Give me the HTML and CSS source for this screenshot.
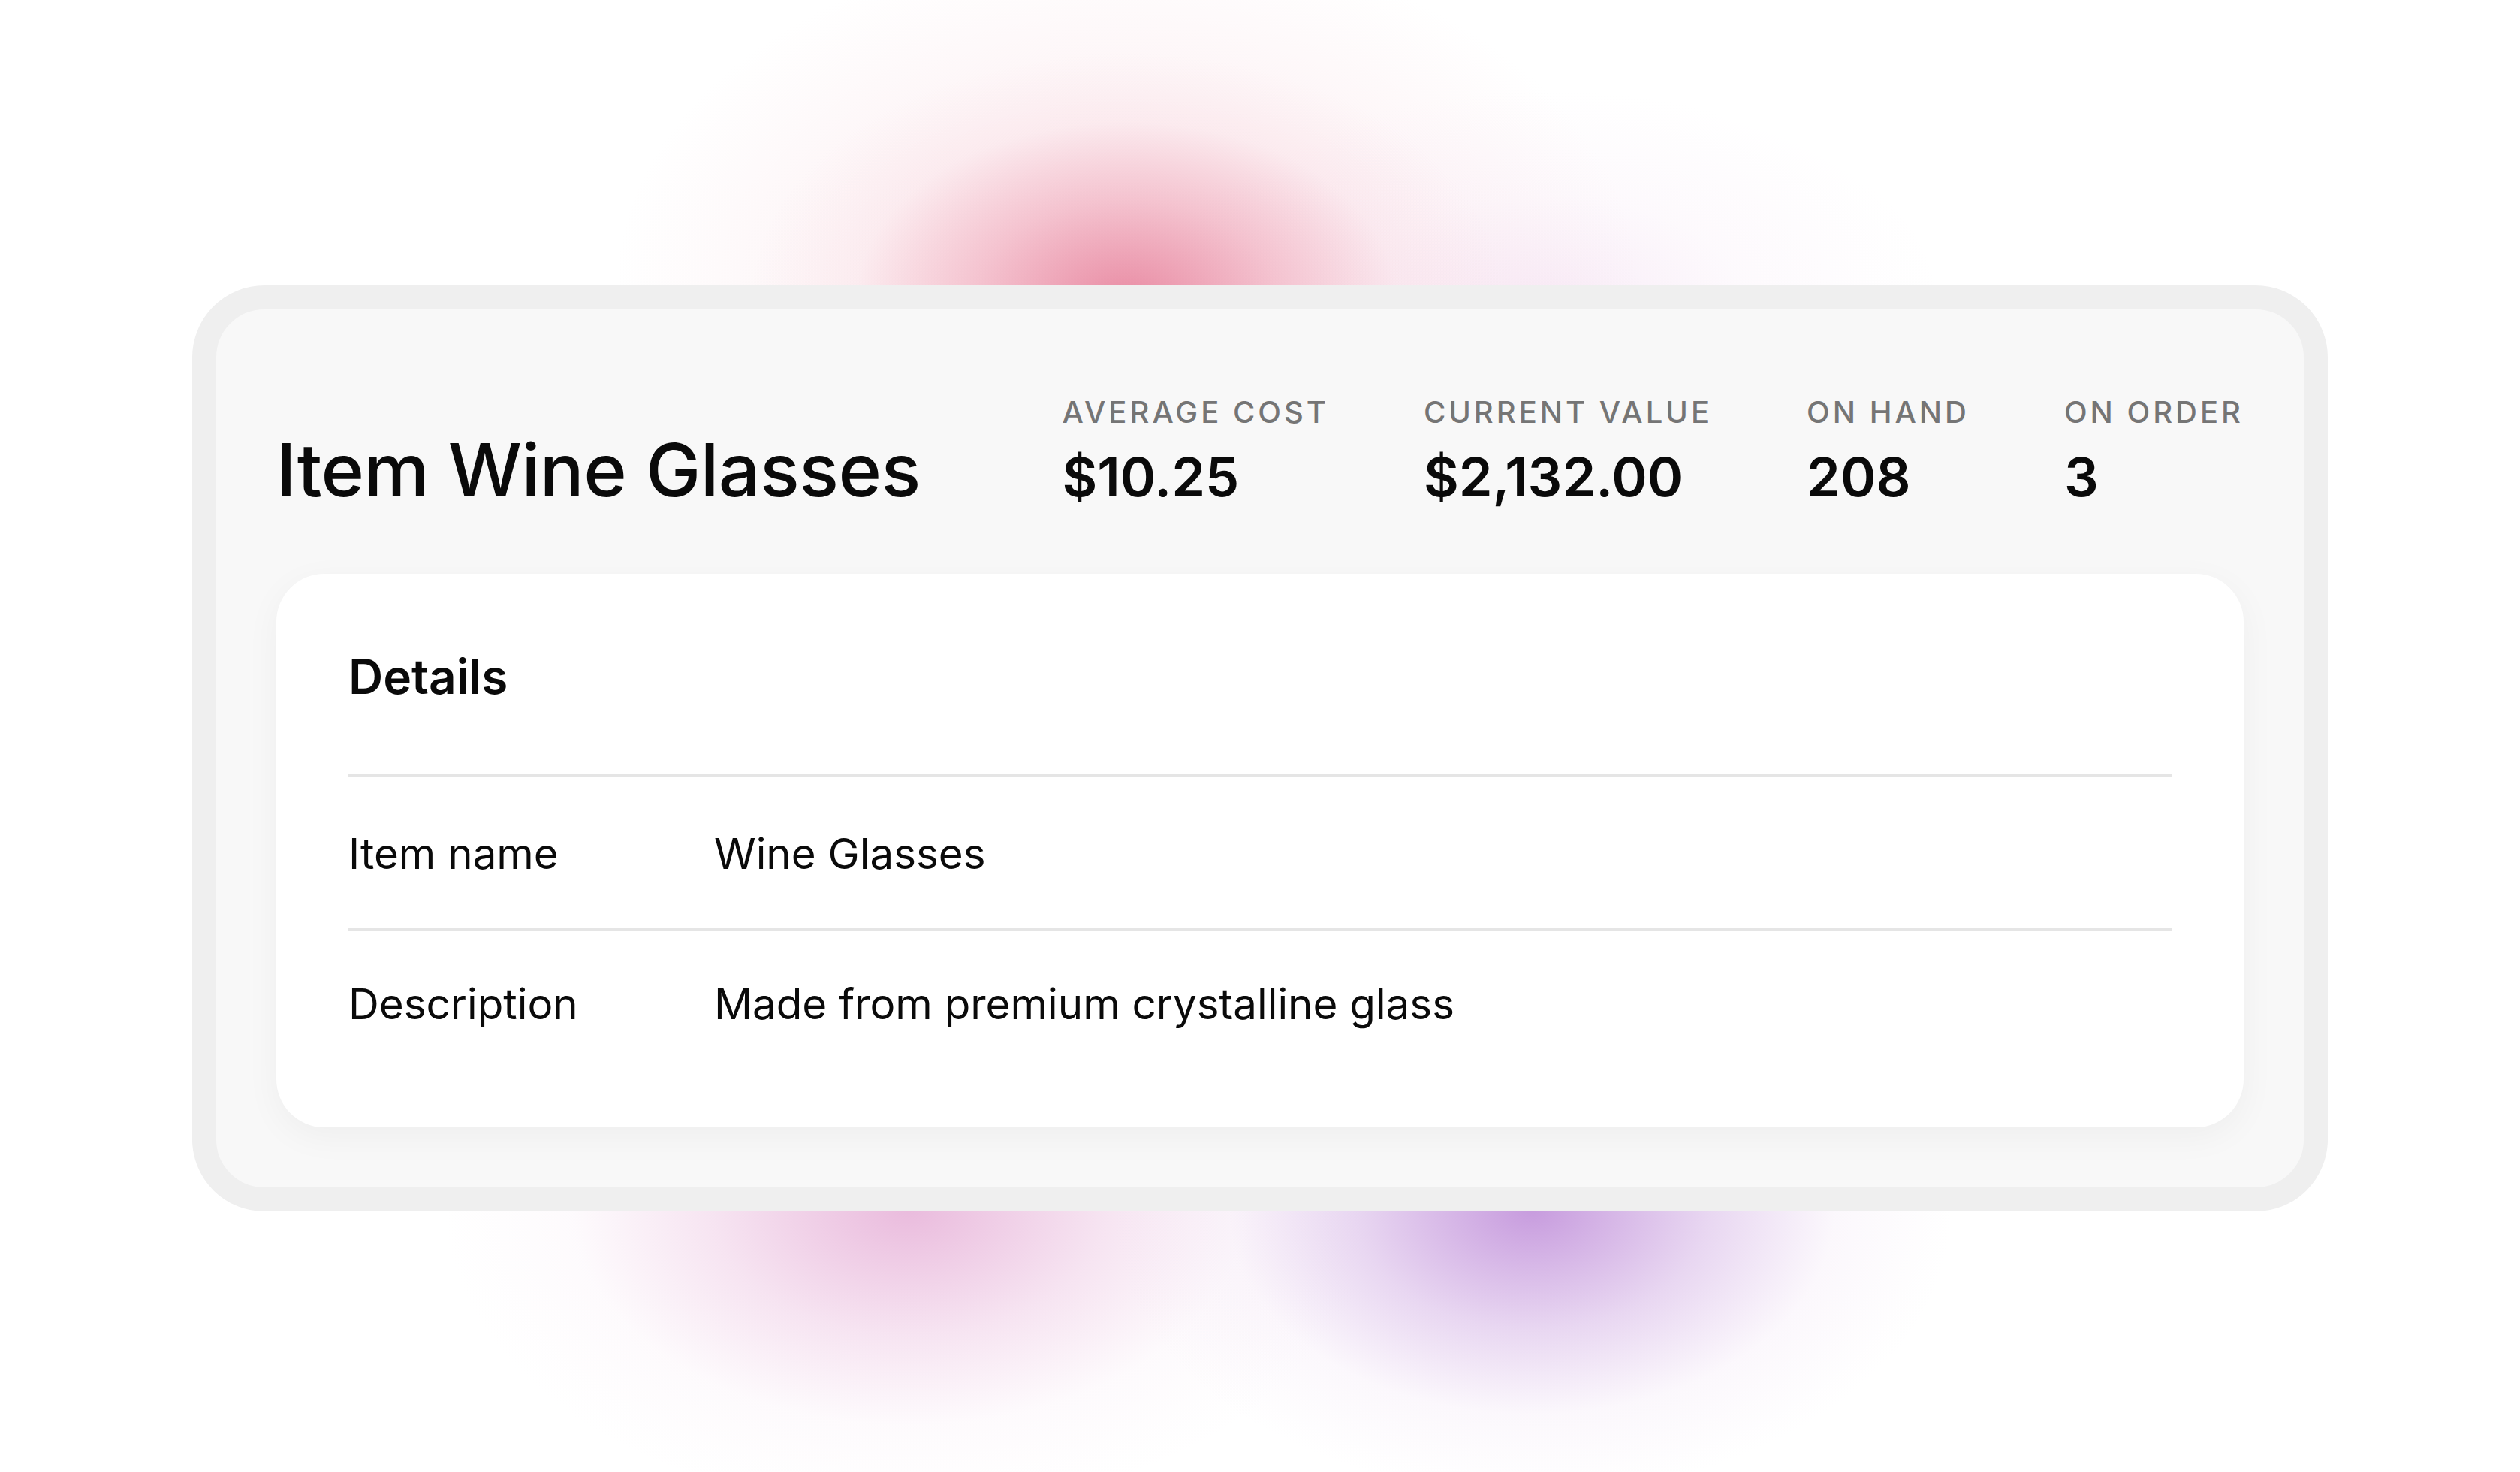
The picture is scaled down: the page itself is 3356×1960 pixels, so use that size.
FILE: index.html
```html
<!DOCTYPE html>
<html lang="en">
<head>
<meta charset="utf-8">
<title>Item Wine Glasses</title>
<link rel="stylesheet" href="styles.css">
</head>
<body>
<main class="stage">
  <section class="frame">
    <div class="panel">
      <header class="head">
        <h1 class="title">Item Wine Glasses</h1>
        <div class="stats">
          <div class="stat">
            <div class="stat-label">AVERAGE COST</div>
            <div class="stat-value">$10.25</div>
          </div>
          <div class="stat">
            <div class="stat-label">CURRENT VALUE</div>
            <div class="stat-value">$2,132.00</div>
          </div>
          <div class="stat">
            <div class="stat-label">ON HAND</div>
            <div class="stat-value">208</div>
          </div>
          <div class="stat">
            <div class="stat-label">ON ORDER</div>
            <div class="stat-value">3</div>
          </div>
        </div>
      </header>
      <div class="card">
        <h2 class="card-title">Details</h2>
        <div class="row">
          <div class="row-label">Item name</div>
          <div class="row-value">Wine Glasses</div>
        </div>
        <div class="row">
          <div class="row-label">Description</div>
          <div class="row-value">Made from premium crystalline glass</div>
        </div>
      </div>
    </div>
  </section>
</main>
</body>
</html>
```
FILE: styles.css
```css
html, body {
  margin: 0;
  padding: 0;
}

body {
  width: 3356px;
  height: 1960px;
  overflow: hidden;
  font-family: Inter, "Noto Sans", "Liberation Sans", sans-serif;
  color: #0d0d0d;
  background-color: #ffffff;
  background-image:
    radial-gradient(ellipse 500px 330px at 1500px 400px, rgba(232, 135, 160, 0.95) 0%, rgba(238, 160, 180, 0.55) 40%, rgba(245, 200, 212, 0.18) 72%, rgba(255, 255, 255, 0) 100%),
    radial-gradient(ellipse 520px 280px at 2060px 400px, rgba(236, 200, 232, 0.35) 0%, rgba(242, 218, 240, 0.15) 50%, rgba(255, 255, 255, 0) 100%),
    radial-gradient(ellipse 680px 460px at 1500px 380px, rgba(245, 200, 210, 0.45) 0%, rgba(255, 255, 255, 0) 100%),
    radial-gradient(ellipse 560px 380px at 2040px 1610px, rgba(196, 150, 220, 0.95) 0%, rgba(210, 175, 228, 0.5) 42%, rgba(235, 215, 240, 0.18) 72%, rgba(255, 255, 255, 0) 100%),
    radial-gradient(ellipse 620px 400px at 1210px 1610px, rgba(230, 175, 215, 0.85) 0%, rgba(236, 195, 225, 0.45) 42%, rgba(245, 225, 240, 0.15) 72%, rgba(255, 255, 255, 0) 100%);
  background-repeat: no-repeat;
}

.stage {
  display: flex;
  justify-content: center;
  padding-top: 380px;
}

.frame {
  box-sizing: border-box;
  width: 2844px;
  border: 32px solid #efefef;
  border-radius: 96px;
  background: #f8f8f8;
}

.panel {
  padding: 113px 80px 80px;
}

.head {
  display: flex;
  justify-content: space-between;
  align-items: flex-end;
}

.title {
  margin: 0;
  font-size: 98px;
  line-height: 1.1;
  font-weight: 500;
  letter-spacing: -0.5px;
  color: #0a0a0a;
}

.stats {
  display: flex;
  gap: 126px;
}

.stat {
  display: flex;
  flex-direction: column;
  gap: 18px;
}

.stat-label {
  font-size: 40px;
  line-height: 1.2;
  font-weight: 500;
  letter-spacing: 0.1em;
  color: #757575;
  white-space: nowrap;
}

.stat-value {
  font-size: 72px;
  line-height: 1.23;
  font-weight: 600;
  color: #0a0a0a;
}

.card {
  margin-top: 84px;
  background: #ffffff;
  border-radius: 64px;
  padding: 99px 96px 66px;
  box-shadow: 0 12px 48px rgba(0, 0, 0, 0.045);
}

.card-title {
  margin: 0;
  padding-bottom: 92px;
  font-size: 64px;
  line-height: 1.2;
  font-weight: 600;
  color: #0a0a0a;
}

.row {
  display: grid;
  grid-template-columns: 487px 1fr;
  border-top: 4px solid #e5e5e5;
  padding: 68px 0 64px;
  font-size: 56.5px;
  line-height: 1.2;
  font-weight: 400;
  color: #0a0a0a;
}

.row + .row {
  padding-top: 64px;
}
```
